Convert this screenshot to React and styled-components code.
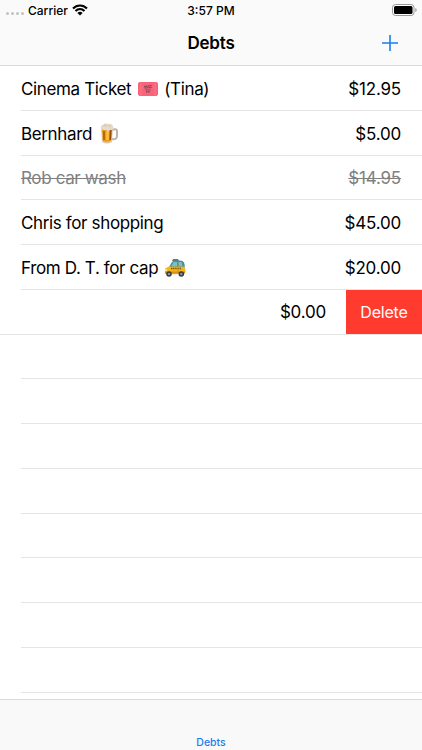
import React from 'react';
import styled, { createGlobalStyle } from 'styled-components';

const GlobalStyle = createGlobalStyle`
  * {
    box-sizing: border-box;
  }
  body {
    margin: 0;
    background: #fff;
    color: #000;
    font-family: Inter, "Liberation Sans", sans-serif;
    overflow: hidden;
  }
`;

const Screen = styled.div`
  display: flex;
  flex-direction: column;
  width: 422px;
  height: 750px;
`;

const Header = styled.header`
  flex: none;
  height: 66px;
  background: #fafafa;
  border-bottom: 1px solid #d9d9d9;
`;

const StatusBar = styled.div`
  display: grid;
  grid-template-columns: 1fr auto 1fr;
  align-items: center;
  height: 20px;
  padding: 0 5px;
  font-size: 12px;
  font-weight: 500;
`;

const StatusLeft = styled.div`
  display: flex;
  align-items: center;
  padding-left: 1px;
`;

const Signal = styled.div`
  display: flex;
  gap: 2px;
  margin: 7px 4px 0 0;
`;

const Dot = styled.i`
  width: 3px;
  height: 3px;
  border-radius: 50%;
  background: #c2c2c2;
`;

const Carrier = styled.span`
  margin-right: 4px;
`;

const Battery = styled.svg`
  justify-self: end;
`;

const NavBar = styled.div`
  display: grid;
  grid-template-columns: 1fr auto 1fr;
  align-items: center;
  height: 46px;
  padding-right: 24px;
  padding-left: 24px;
`;

const Title = styled.h1`
  grid-column: 2;
  margin: 0;
  font-size: 17px;
  font-weight: 600;
  letter-spacing: -0.2px;
`;

const AddButton = styled.button`
  justify-self: end;
  display: flex;
  padding: 0;
  border: 0;
  background: none;
  color: #1a7df0;
`;

const List = styled.ul`
  flex: 1;
  min-height: 0;
  margin: 0;
  padding: 0;
  overflow: hidden;
  list-style: none;
`;

const Row = styled.li`
  display: flex;
  align-items: center;
  justify-content: space-between;
  height: 44.77px;
  margin-left: ${({ $full }) => ($full ? 0 : '21px')};
  padding-right: ${({ $full }) => ($full ? 0 : '21px')};
  border-bottom: 1px solid #e5e5e5;
  color: ${({ $paid }) => ($paid ? '#808080' : '#000')};
  font-size: 17px;
  letter-spacing: -0.3px;
`;

const Name = styled.div`
  display: flex;
  align-items: center;
  gap: ${({ $gap }) => $gap || 6}px;
  padding-top: 2px;
  letter-spacing: -0.36px;
  text-decoration: ${({ $paid }) => ($paid ? 'line-through' : 'none')};
  text-decoration-thickness: 1px;
`;

const Amount = styled.span`
  margin-left: auto;
  padding-top: ${({ $flat }) => ($flat ? 0 : '2px')};
  letter-spacing: -0.2px;
  text-decoration: ${({ $paid }) => ($paid ? 'line-through' : 'none')};
  text-decoration-thickness: 1px;
`;

const DeleteButton = styled.button`
  align-self: stretch;
  width: 76px;
  margin-left: 20px;
  padding: 0;
  border: 0;
  background: #ff3b30;
  color: #fff;
  font: 400 16px Inter, "Liberation Sans", sans-serif;
  letter-spacing: -0.2px;
`;

const TabBar = styled.nav`
  flex: none;
  display: flex;
  align-items: flex-end;
  justify-content: center;
  height: 51px;
  padding-bottom: 1px;
  border-top: 1px solid #d9d9d9;
  background: #f9f9f9;
  color: #1a7df0;
  font-size: 10.5px;
  font-weight: 500;
`;

const Wifi = () => (
  <svg width="16" height="12" viewBox="0 0 16 12">
    <g fill="none" stroke="#000" strokeWidth="2.1">
      <path d="M1 4.6C5 .5 11 .5 15 4.6" />
      <path d="M3.5 7.1C6.1 4.5 9.9 4.5 12.5 7.1" />
    </g>
    <path d="M5.4 9Q8 6.7 10.6 9L8 11.6Z" />
  </svg>
);

const TicketIcon = () => (
  <svg width="20" height="14" viewBox="0 0 20 14">
    <path
      d="M1.5 0h17L20 1.3v11.4L18.500 14h-17L0 12.700V1.300Z"
      fill="#f8647a"
    />
    <path d="M3 1v12M17 1v12" stroke="#fb8090" strokeWidth=".8" />
    <path d="M6 4.500l8-1M6.500 6l7-.500M7.500 8h5M8 9.800h4" stroke="#80414b" strokeWidth="1.200" strokeDasharray="1.5 .4" />
  </svg>
);

const BeerIcon = () => (
  <svg width="19" height="21" viewBox="0 0 19 21">
    <path d="M12 7q5-2 5 1v5q0 4-5 3" fill="none" stroke="#bbb4a9" strokeWidth="2" />
    <path d="M1 3.5 2 19q5 3 10 0l1-15Z" fill="#d9c8ae" />
    <path d="M2 7l.8 10.7q4 2 8.2 0l1-10.8Z" fill="#e89b16" />
    <path d="M4 8v9" stroke="#b65f0b" strokeWidth="1.7" />
    <path d="M7.500 8v9" stroke="#ffc33b" strokeWidth="2.500" />
    <path d="M10.7 7l-.5 10" stroke="#9a4c0e" strokeWidth="1.700" />
    <path d="M1 5Q0 2 3 2q2-3 5-1 4-1 5 2 1 3-1 4-2-1-3 1-2 0-3-1-2 1-5-2Z" fill="#e8dacb" />
    <path d="M3 3q2-2 4 0M8 3q2-1 3 1" fill="none" stroke="#cdb49e" strokeWidth=".7" />
  </svg>
);

const TaxiIcon = () => (
  <svg width="22" height="18" viewBox="0 0 22 18">
    <path d="M9 0h5l1 2H8Z" fill="#66777a" />
    <path d="M5 8 8 3q1-1.500 3-1.500h5q3 0 4 2l1 4-2 1H5Z" fill="#43909e" />
    <path d="M7.500 7 9.500 3h3.500v4ZM14.500 3h3l1 4h-4Z" fill="#78c0cb" />
    <path d="M1 9.500 5 7.500h14l2 .5.500 4.500-.500 2-16 1-4-1 .200-3Z" fill="#f4b51a" />
    <path d="M1 12.500h20v2H1Z" fill="#dc8d0b" />
    <path d="M7 9.500h10" stroke="#715219" strokeWidth="1.300" strokeDasharray="1.2 .6" />
    <path d="M14 3v10" stroke="#c68b18" strokeWidth=".7" />
    <path d="M1 11h2" stroke="#fff3a2" strokeWidth="1.600" />
    <g fill="#8c9398" stroke="#333a3e" strokeWidth="1.5">
      <circle cx="5" cy="15" r="2" />
      <circle cx="17.3" cy="15" r="2" />
    </g>
  </svg>
);

const debts = [
  { id: 1, name: 'Cinema Ticket', icon: <TicketIcon />, suffix: '(Tina)', gap: 6.5, amount: '$12.95' },
  { id: 2, name: 'Bernhard', icon: <BeerIcon />, gap: 8, amount: '$5.00' },
  { id: 3, name: 'Rob car wash', amount: '$14.95', paid: true },
  { id: 4, name: 'Chris for shopping', amount: '$45.00' },
  { id: 5, name: 'From D. T. for cap', icon: <TaxiIcon />, amount: '$20.00' },
];

const App = () => {
  return (
    <>
      <GlobalStyle />
      <Screen>
        <Header>
          <StatusBar>
            <StatusLeft>
              <Signal>
                {[0, 1, 2, 3].map((dot) => (
                  <Dot key={dot} />
                ))}
              </Signal>
              <Carrier>Carrier</Carrier>
              <Wifi />
            </StatusLeft>
            <span>3:57 PM</span>
            <Battery width="25" height="12" viewBox="0 0 25 12">
              <rect x=".5" y=".5" width="21.5" height="11" rx="3" fill="#fff" stroke="#999" />
              <rect x="2" y="2" width="18.5" height="8" rx="1.5" />
              <path d="M23.3 4v4q1.4-.5 1.4-2t-1.4-2" fill="#999" />
            </Battery>
          </StatusBar>
          <NavBar>
            <Title>Debts</Title>
            <AddButton aria-label="Add">
              <svg width="16" height="16" viewBox="0 0 16 16">
                <path d="M8 0v16M0 8h16" stroke="currentColor" strokeWidth="1.6" />
              </svg>
            </AddButton>
          </NavBar>
        </Header>
        <List>
          {debts.map((debt) => (
            <Row key={debt.id} $paid={debt.paid}>
              <Name $paid={debt.paid} $gap={debt.gap}>
                <span>{debt.name}</span>
                {debt.icon}
                {debt.suffix && <span>{debt.suffix}</span>}
              </Name>
              <Amount $paid={debt.paid}>{debt.amount}</Amount>
            </Row>
          ))}
          <Row $full>
            <Amount $flat>$0.00</Amount>
            <DeleteButton>Delete</DeleteButton>
          </Row>
          {Array.from({ length: 8 }, (_, index) => (
            <Row key={index} />
          ))}
        </List>
        <TabBar>Debts</TabBar>
      </Screen>
    </>
  );
};

export default App;
